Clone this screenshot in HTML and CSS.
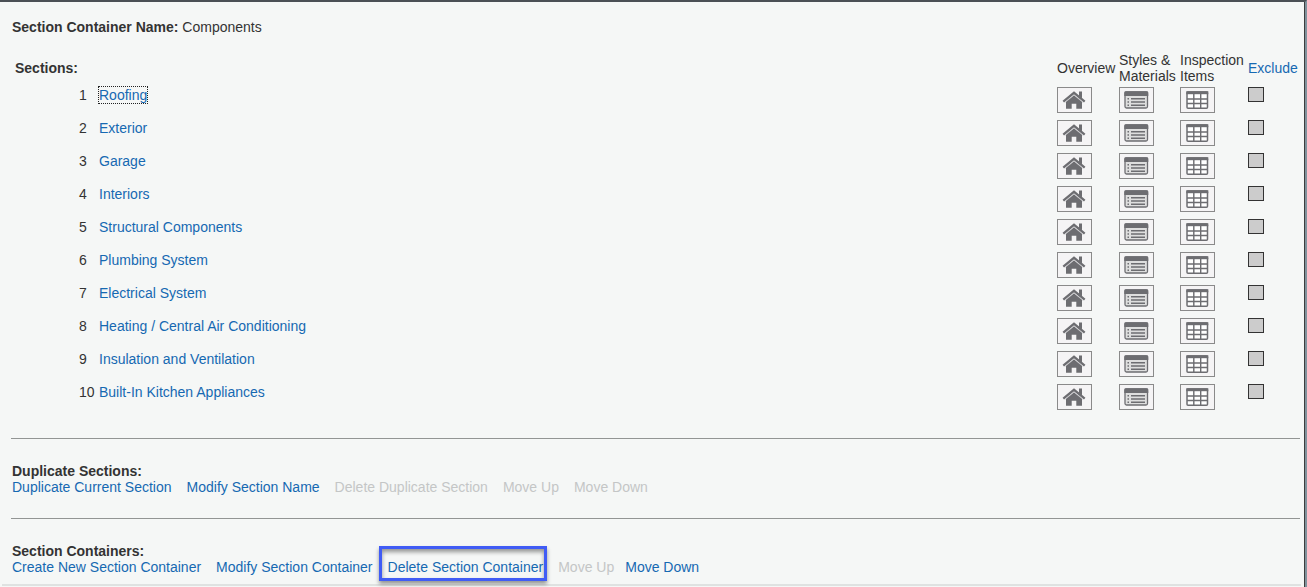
FILE: index.html
```html
<!DOCTYPE html>
<html lang="en">
<head>
<meta charset="utf-8">
<title>Section Container</title>
<link rel="stylesheet" href="styles.css">
<script src="sections.js" defer></script>
</head>
<body>
<svg class="sprite" aria-hidden="true">
  <symbol id="home" viewBox="0 0 26 20">
    <path d="M13 5.200 21 11.500v7.300h-5.700v-5h-4.600v5H5V11.500z"/>
    <path d="M2.300 11.600 13 2.800l10.700 8.800" fill="none" stroke="currentColor" stroke-width="2.300"/>
    <path d="M4 12.500 13 5.100l9 7.400" fill="none" stroke="#c9c9cb" stroke-width=".7"/>
    <path d="M18 1.500h3v7l-3-2.600z"/>
  </symbol>
  <symbol id="list" viewBox="0 0 26 20">
    <rect x="2" y="2" width="22.500" height="16" rx="1.500" fill="#dedede" stroke="currentColor" stroke-width="1.300"/>
    <path d="M1.300 2.500q0-1.300 1.500-1.300h21q1.500 0 1.500 1.300V6h-24z"/>
    <path d="M4.500 8.800h1.500M4.500 12h1.500M4.500 15.200h1.500M8 8.800h14M8 12h14M8 15.200h14" stroke="currentColor" stroke-width="1.400"/>
  </symbol>
  <symbol id="grid" viewBox="0 0 26 20">
    <rect x="3" y="2" width="20.500" height="16.300" rx="1" fill="#fff" stroke="currentColor" stroke-width="1.500"/>
    <path d="M2.300 1.200h22v3h-22z"/>
    <path d="M3 9h20M3 13.500h20M9.800 3v15M16.700 3v15" stroke="currentColor" stroke-width="1.400"/>
  </symbol>
</svg>
<main class="panel">
  <h1 class="title"><b>Section Container Name:</b> Components</h1>
  <table class="sections">
    <thead>
      <tr>
        <th class="heading" colspan="2">Sections:</th>
        <th class="col-overview">Overview</th>
        <th class="col-styles">Styles &amp; Materials</th>
        <th class="col-items">Inspection Items</th>
        <th class="col-exclude"><a href="#">Exclude</a></th>
      </tr>
    </thead>
    <tbody id="rows"></tbody>
  </table>
  <section class="group">
    <h2>Duplicate Sections:</h2>
    <nav class="actions">
      <a href="#">Duplicate Current Section</a>
      <a href="#">Modify Section Name</a>
      <a class="off" aria-disabled="true">Delete Duplicate Section</a>
      <a class="off" aria-disabled="true">Move Up</a>
      <a class="off" aria-disabled="true">Move Down</a>
    </nav>
  </section>
  <section class="group">
    <h2>Section Containers:</h2>
    <nav class="actions">
      <a href="#">Create New Section Container</a>
      <a href="#">Modify Section Container</a>
      <a href="#" class="marked">Delete Section Container</a>
      <span class="move">
        <a class="off" aria-disabled="true">Move Up</a>
        <a href="#">Move Down</a>
      </span>
    </nav>
  </section>
  <div class="rule"></div>
</main>
</body>
</html>
```
FILE: styles.css
```css
* { box-sizing: border-box; }
body {
  margin: 0;
  background: #f5f7f6;
  color: #333;
  font: 14px/16px "Liberation Sans", Arial, sans-serif;
}
.sprite { position: absolute; width: 0; height: 0; }
.panel {
  min-height: 100vh;
  padding: 17px 4px 0 2px;
  border-top: 2px solid #4b5055;
  border-right: 2px solid #80929c;
  box-shadow: inset -1px 0 #3c3c3c;
}
.title { margin: 0 10px 17px; font-size: 14px; font-weight: 400; }
.title b { font-weight: 700; }
a { color: #1669b2; text-decoration: none; }
.sections {
  width: calc(100% - 11px);
  margin-left: 10px;
  table-layout: fixed;
  border-collapse: collapse;
}
th, td { padding: 0; text-align: left; vertical-align: top; }
th { height: 32px; font-weight: 400; vertical-align: middle; }
td { height: 33px; padding-top: 3px; }
.sections .heading { padding-left: 3px; font-weight: 700; }
.col-overview { width: 62px; }
.col-styles { width: 61px; }
.col-items { width: 68px; }
.col-exclude { width: 52px; }
.number { display: inline-block; min-width: 20px; margin-left: 67px; }
.current { outline: 1px dotted #222; }
.tool {
  display: flex;
  align-items: center;
  justify-content: center;
  width: 35px;
  height: 26px;
  padding: 0 2px 0 0;
  border: 1px solid #8a8a8a;
  background: #f5f4f5;
  color: #6d6d71;
}
.tool svg { width: 26px; height: 20px; fill: currentColor; }
.check {
  appearance: none;
  display: block;
  width: 16px;
  height: 15px;
  margin: 0;
  border: 1px solid #333;
  background: #ccc;
}
.group { margin: 0 1px 0 9px; border-top: 1px solid #929594; padding: 24px 1px 23px; }
.sections + .group { margin-top: 24px; }
.group:last-of-type { padding-bottom: 9px; }
.group h2 { margin: 0; font-size: 14px; }
.actions { display: flex; flex-wrap: wrap; gap: 0 15px; }
.move { display: flex; gap: 11px; }
.off { color: #c4c6c6; }
.marked { position: relative; }
.marked::after {
  content: "";
  position: absolute;
  inset: -13px -4px -6px -9px;
  border: 3px solid #405cf5;
  box-shadow: 0 3px 4px #0006, inset 0 3px 4px #0006;
}
.rule { height: 2px; background: #dfe2e1; }
```
FILE: sections.js
```javascript
const names = [
  "Roofing", "Exterior", "Garage", "Interiors", "Structural Components",
  "Plumbing System", "Electrical System", "Heating / Central Air Conditioning",
  "Insulation and Ventilation", "Built-In Kitchen Appliances"
];
const tools = [["home", "Overview"], ["list", "Styles & Materials"], ["grid", "Inspection Items"]];
document.getElementById("rows").innerHTML = names.map((name, i) => `
  <tr>
    <td colspan="2"><span class="number">${i + 1}</span><a href="#"${i === 0 ? ' class="current"' : ""}>${name}</a></td>
    ${tools.map(([icon, label]) => `<td><button class="tool" type="button" aria-label="${label}: ${name}"><svg aria-hidden="true"><use href="#${icon}"/></svg></button></td>`).join("")}
    <td><input class="check" type="checkbox" aria-label="Exclude ${name}"></td>
  </tr>`).join("");
```
